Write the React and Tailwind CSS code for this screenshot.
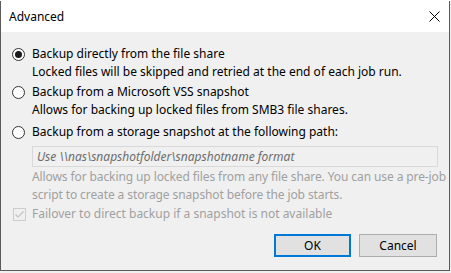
import React from 'react';

const Radio = ({ checked }) => (
  <span className="w-[13px] h-[13px] rounded-full border border-[#333333] bg-white flex items-center justify-center shrink-0">
    {checked && <span className="w-[7px] h-[7px] rounded-full bg-[#1a1a1a]" />}
  </span>
);

const Option = ({ checked, label, children }) => (
  <div className="flex flex-col">
    <div className="flex items-center h-[18px] gap-[7px]">
      <Radio checked={checked} />
      <span className="text-black">{label}</span>
    </div>
    <div className="pl-[20px]">{children}</div>
  </div>
);

const App = () => {
  return (
    <div className="w-[451px] h-[273px] bg-[#f0f0f0] overflow-hidden font-['Segoe_UI','Noto_Sans',sans-serif] text-[12px] leading-[18px]">
      <div className="h-[1px] bg-white" />
      <div className="w-[450px] h-[270px] border border-t-0 border-[#5a5a5a] flex flex-col bg-[#f0f0f0]">
        {/* Title bar */}
        <div className="h-[31px] bg-white flex items-center justify-between pl-[8px] pr-[9px] shrink-0">
          <span className="text-black">Advanced</span>
          <svg width="11" height="11" viewBox="0 0 11 11" className="mt-[-1px]">
            <path d="M0.5 0.5L10.5 10.5M10.5 0.5L0.5 10.5" stroke="#000" strokeWidth="1" fill="none" />
          </svg>
        </div>

        {/* Body */}
        <div className="flex-1 flex flex-col pl-[11px] pr-[11px] pt-[13px]">
          <Option checked label="Backup directly from the file share">
            <div className="text-black">Locked files will be skipped and retried at the end of each job run.</div>
          </Option>

          <div className="mt-[2px]">
            <Option label="Backup from a Microsoft VSS snapshot">
              <div className="text-black">Allows for backing up locked files from SMB3 file shares.</div>
            </Option>
          </div>

          <div className="mt-[4px]">
            <Option label="Backup from a storage snapshot at the following path:">
              <div className="mt-[5px] h-[21px] border border-[#d9d9d9] bg-[#f0f0f0] flex items-center px-[4px] italic text-[#6d6d6d]">
                Use \\nas\snapshotfolder\snapshotname format
              </div>
              <div className="mt-[1px] text-[#a0a0a0] whitespace-nowrap tracking-[-0.1px]">
                Allows for backing up locked files from any file share. You can use a pre-job
                <br />
                script to create a storage snapshot before the job starts.
              </div>
            </Option>
          </div>

          <div className="flex items-center h-[18px] gap-[6px] mt-[1px] pl-[1px]">
            <span className="w-[13px] h-[13px] border border-[#cccccc] bg-[#f0f0f0] flex items-center justify-center shrink-0">
              <svg width="11" height="11" viewBox="0 0 11 11">
                <path d="M1.5 5.5L4 8L9.5 2.5" stroke="#c2c2c2" strokeWidth="1.2" fill="none" />
              </svg>
            </span>
            <span className="text-[#a0a0a0]">Failover to direct backup if a snapshot is not available</span>
          </div>

          <div className="flex justify-end gap-[8px] mt-[11px] pr-[1px]">
            <button className="w-[77px] h-[23px] bg-[#e1e1e1] border-2 border-[#0078d7] text-black">OK</button>
            <button className="w-[78px] h-[23px] bg-[#e1e1e1] border border-[#adadad] text-black">Cancel</button>
          </div>
        </div>
      </div>
    </div>
  );
};

export default App;
